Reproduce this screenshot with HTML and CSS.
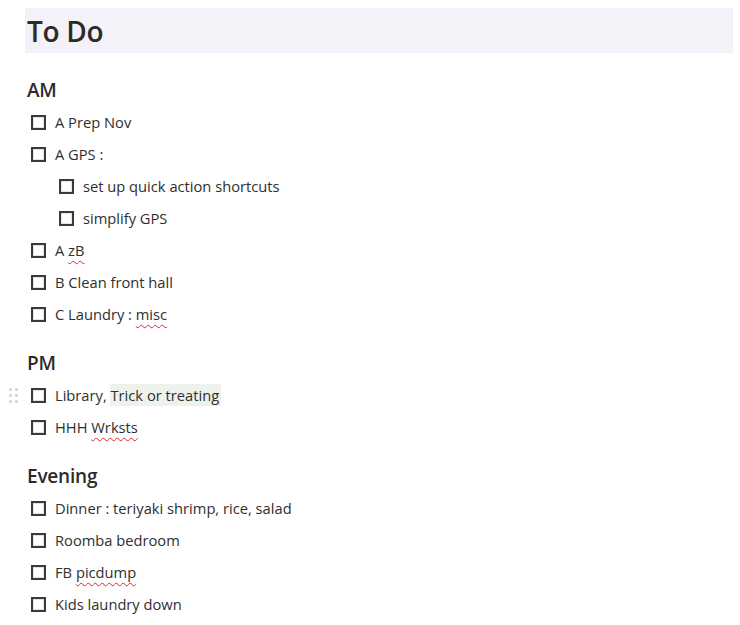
FILE: index.html
```html
<!DOCTYPE html>
<html lang="en">
<head>
<meta charset="utf-8">
<title>To Do</title>
<link rel="stylesheet" href="styles.css">
</head>
<body>
<main class="page">
  <h1 class="title">To Do</h1>

  <section class="section first">
    <h2 class="heading">AM</h2>
    <ul class="list">
      <li class="item"><span class="box"></span><span class="label">A Prep Nov</span></li>
      <li class="item"><span class="box"></span><span class="label">A GPS :</span></li>
      <li class="item nested"><span class="box"></span><span class="label">set up quick action shortcuts</span></li>
      <li class="item nested"><span class="box"></span><span class="label">simplify GPS</span></li>
      <li class="item"><span class="box"></span><span class="label">A <span class="spell">zB</span></span></li>
      <li class="item"><span class="box"></span><span class="label">B Clean front hall</span></li>
      <li class="item"><span class="box"></span><span class="label">C Laundry : <span class="spell">misc</span></span></li>
    </ul>
  </section>

  <section class="section">
    <h2 class="heading">PM</h2>
    <ul class="list">
      <li class="item hovered"><span class="handle"><i></i><i></i><i></i><i></i><i></i><i></i></span><span class="box"></span><span class="label">Library, <span class="hl">Trick or treating</span></span></li>
      <li class="item"><span class="box"></span><span class="label">HHH <span class="spell">Wrksts</span></span></li>
    </ul>
  </section>

  <section class="section">
    <h2 class="heading">Evening</h2>
    <ul class="list">
      <li class="item"><span class="box"></span><span class="label">Dinner : teriyaki shrimp, rice, salad</span></li>
      <li class="item"><span class="box"></span><span class="label">Roomba bedroom</span></li>
      <li class="item"><span class="box"></span><span class="label">FB <span class="spell">picdump</span></span></li>
      <li class="item"><span class="box"></span><span class="label">Kids laundry down</span></li>
    </ul>
  </section>
</main>
</body>
</html>
```

FILE: styles.css
```css
* { box-sizing: border-box; }

html, body {
  margin: 0;
  padding: 0;
  background: #ffffff;
}

body {
  font-family: "Open Sans", "Noto Sans", sans-serif;
  color: #2f2f2f;
}

.page {
  padding: 8px 7px 0 25px;
}

.title {
  margin: 0;
  height: 45px;
  line-height: 46px;
  padding-left: 2px;
  background: #f4f2f8;
  font-size: 28px;
  font-weight: 600;
  color: #2b2b2b;
  letter-spacing: -0.3px;
}

.section {
  margin-top: 18px;
}

.section.first {
  margin-top: 22px;
}

.heading {
  margin: 0 0 1px 0;
  height: 30px;
  line-height: 30px;
  padding-left: 2px;
  font-size: 19px;
  font-weight: 600;
  color: #2b2b2b;
  letter-spacing: -0.2px;
}

.list {
  list-style: none;
  margin: 0;
  padding: 0;
  display: flex;
  flex-direction: column;
}

.item {
  position: relative;
  height: 32px;
  display: flex;
  align-items: center;
  padding-left: 6px;
  font-size: 14.7px;
}

.item.nested {
  padding-left: 34px;
}

.box {
  flex: none;
  width: 15px;
  height: 15px;
  border: 2px solid #3a3a3a;
  background: #fff;
  box-shadow: inset 0 0 0 1px #e4e4e4;
  margin-right: 9px;
}

.label {
  line-height: 22px;
  white-space: nowrap;
}

.spell {
  text-decoration: underline wavy #e0252b;
  text-decoration-thickness: 1px;
  text-underline-offset: 4px;
}

.hl {
  background: #eef2ec;
  padding: 0 2px 0 1px;
  margin-left: -1px;
  display: inline-block;
  line-height: 22px;
}

.handle {
  position: absolute;
  left: -16px;
  top: 8px;
  width: 8px;
  height: 15px;
  display: grid;
  grid-template-columns: 2px 2px;
  grid-template-rows: repeat(3, 2px);
  column-gap: 4px;
  row-gap: 4px;
  align-content: center;
}

.handle i {
  display: block;
  width: 3px;
  height: 3px;
  border-radius: 50%;
  background: #cfcfcf;
}
```
